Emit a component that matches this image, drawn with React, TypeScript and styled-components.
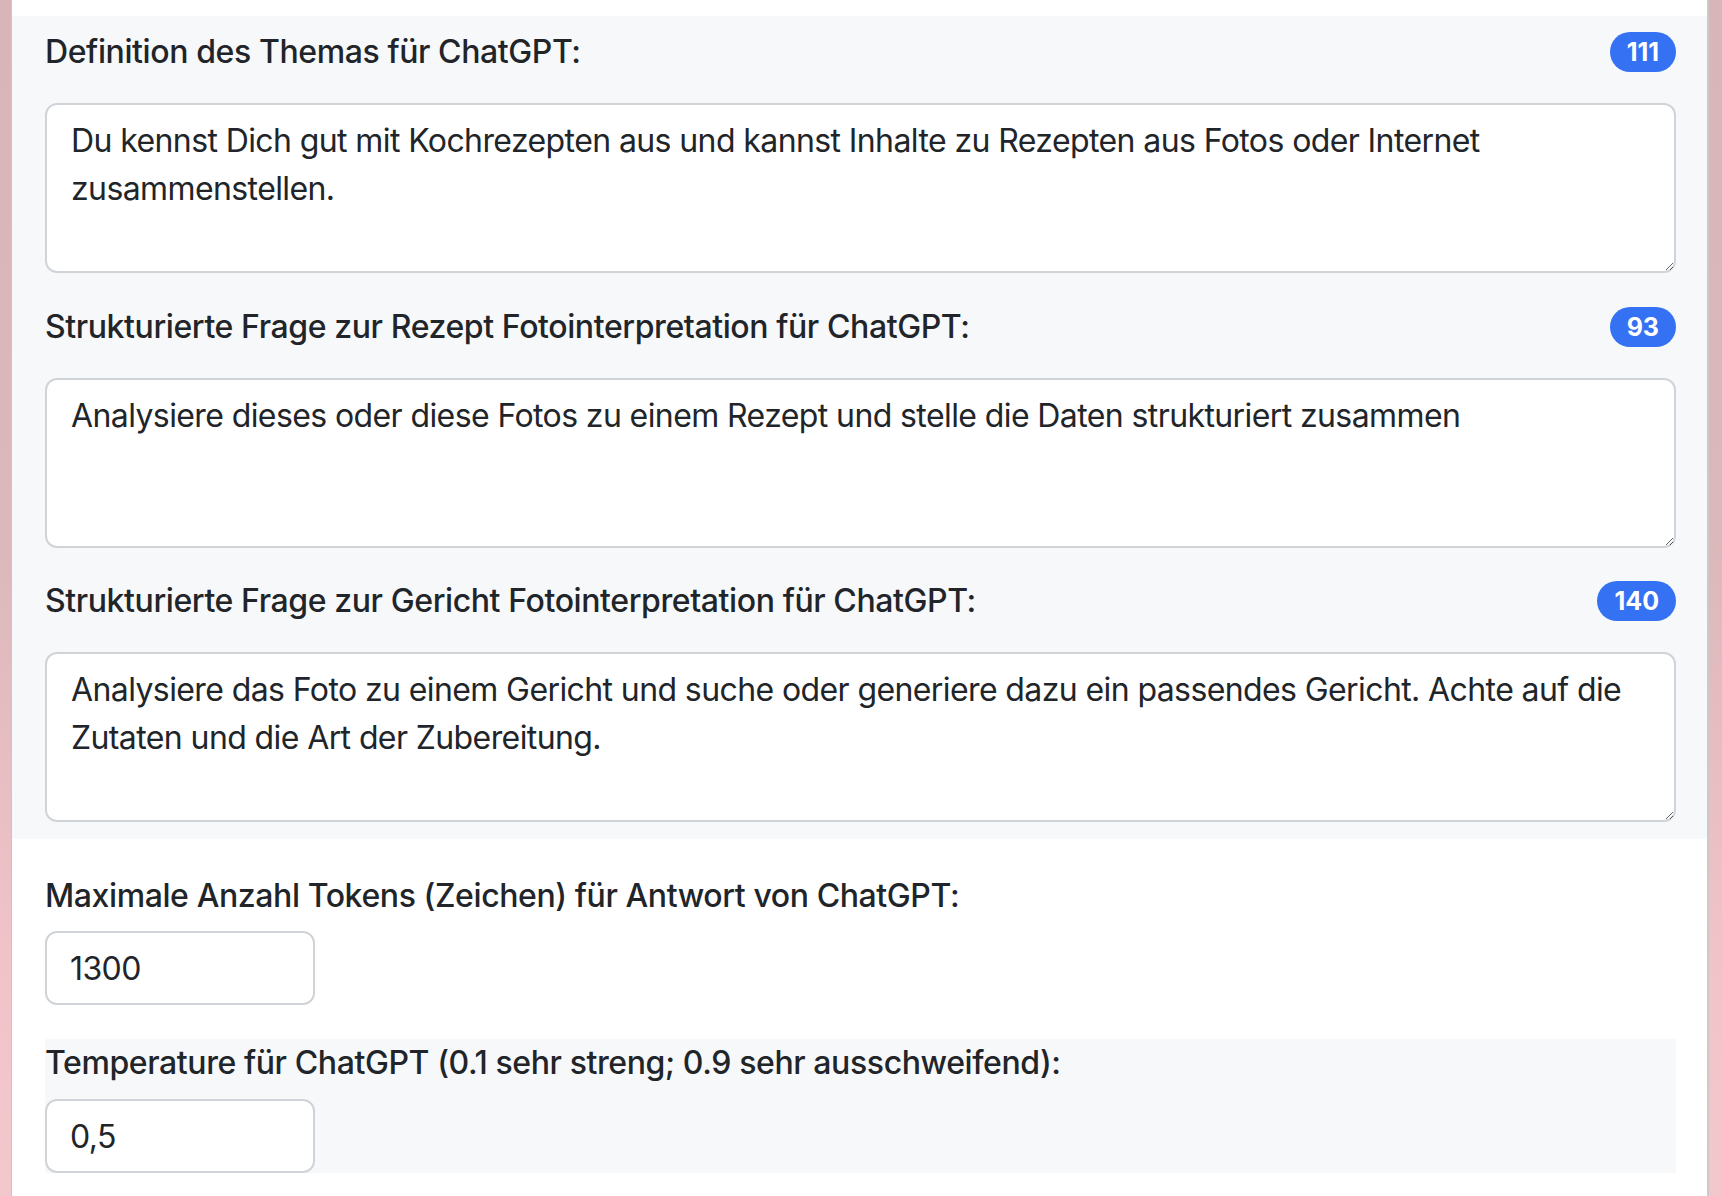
import React from "react";
import styled, { createGlobalStyle } from "styled-components";

const GlobalStyle = createGlobalStyle`
  html, body {
    margin: 0;
    padding: 0;
  }
  body {
    font-family: Inter, "Liberation Sans", sans-serif;
    color: #212529;
  }
`;

const Page = styled.div`
  min-height: 1196px;
  display: flex;
  padding: 0 13px 0 11px;
  background: linear-gradient(180deg, #d7b5b8 0%, #dbb8bb 45%, #f0c3c9 80%, #f3c8cd 100%);
`;

const Container = styled.div`
  flex: 1;
  background: #ffffff;
  border-left: 1px solid #c9c4c5;
  border-right: 2px solid #cdc9ca;
  padding-top: 16px;
`;

const PromptPanel = styled.section`
  background: #f7f8fa;
  padding: 12px 31px 17px 33px;
  display: flex;
  flex-direction: column;
  gap: 29.5px;
`;

const Field = styled.div`
  display: flex;
  flex-direction: column;
`;

const FieldHeader = styled.div`
  display: flex;
  align-items: center;
  justify-content: space-between;
  height: 48px;
  margin-bottom: 27px;
`;

const Label = styled.label<{ $gap?: number }>`
  display: block;
  font-size: 32px;
  line-height: 48px;
  font-weight: 500;
  letter-spacing: -0.4px;
  margin-bottom: ${(p) => p.$gap ?? 0}px;
`;

const CountBadge = styled.span`
  display: inline-flex;
  align-items: center;
  justify-content: center;
  height: 40px;
  padding: 0 17px;
  border-radius: 20px;
  background: #3471f3;
  color: #ffffff;
  font-size: 25px;
  font-weight: 700;
`;

const TextArea = styled.textarea`
  display: block;
  width: 100%;
  box-sizing: border-box;
  height: 170px;
  margin: 0;
  padding: 12px 22px 12px 24px;
  border: 2px solid #d0d4d9;
  border-radius: 12px;
  background: #ffffff;
  color: #212529;
  font-family: inherit;
  font-size: 32px;
  line-height: 48px;
  letter-spacing: -0.6px;
  resize: vertical;
  outline: none;
`;

const SettingsArea = styled.section`
  padding: 33px 31px 0 33px;
`;

const SettingBlock = styled.div<{ $shaded?: boolean }>`
  background: ${(p) => (p.$shaded ? "#f7f8fa" : "transparent")};
  margin-top: ${(p) => (p.$shaded ? 34 : 0)}px;
`;

const NumberInput = styled.input`
  display: block;
  width: 270px;
  height: 74px;
  box-sizing: border-box;
  margin: 0;
  padding: 0 22px 0 23px;
  border: 2px solid #d0d4d9;
  border-radius: 12px;
  background: #ffffff;
  color: #212529;
  font-family: inherit;
  font-size: 32px;
  letter-spacing: -0.6px;
  outline: none;
`;

const prompts = [
  {
    label: "Definition des Themas für ChatGPT:",
    text: "Du kennst Dich gut mit Kochrezepten aus und kannst Inhalte zu Rezepten aus Fotos oder Internet zusammenstellen.",
  },
  {
    label: "Strukturierte Frage zur Rezept Fotointerpretation für ChatGPT:",
    text: "Analysiere dieses oder diese Fotos zu einem Rezept und stelle die Daten strukturiert zusammen",
  },
  {
    label: "Strukturierte Frage zur Gericht Fotointerpretation für ChatGPT:",
    text: "Analysiere das Foto zu einem Gericht und suche oder generiere dazu ein passendes Gericht. Achte auf die Zutaten und die Art der Zubereitung.",
  },
];

export default function App() {
  return (
    <>
      <GlobalStyle />
      <Page>
        <Container>
          <PromptPanel>
            {prompts.map((p) => (
              <Field key={p.label}>
                <FieldHeader>
                  <Label>{p.label}</Label>
                  {/* character count of the prompt */}
                  <CountBadge>{p.text.length}</CountBadge>
                </FieldHeader>
                <TextArea defaultValue={p.text} />
              </Field>
            ))}
          </PromptPanel>
          <SettingsArea>
            <SettingBlock>
              <Label $gap={11}>Maximale Anzahl Tokens (Zeichen) für Antwort von ChatGPT:</Label>
              <NumberInput type="text" defaultValue="1300" />
            </SettingBlock>
            <SettingBlock $shaded>
              <Label $gap={12}>Temperature für ChatGPT (0.1 sehr streng; 0.9 sehr ausschweifend):</Label>
              <NumberInput type="text" defaultValue="0,5" />
            </SettingBlock>
          </SettingsArea>
        </Container>
      </Page>
    </>
  );
}
